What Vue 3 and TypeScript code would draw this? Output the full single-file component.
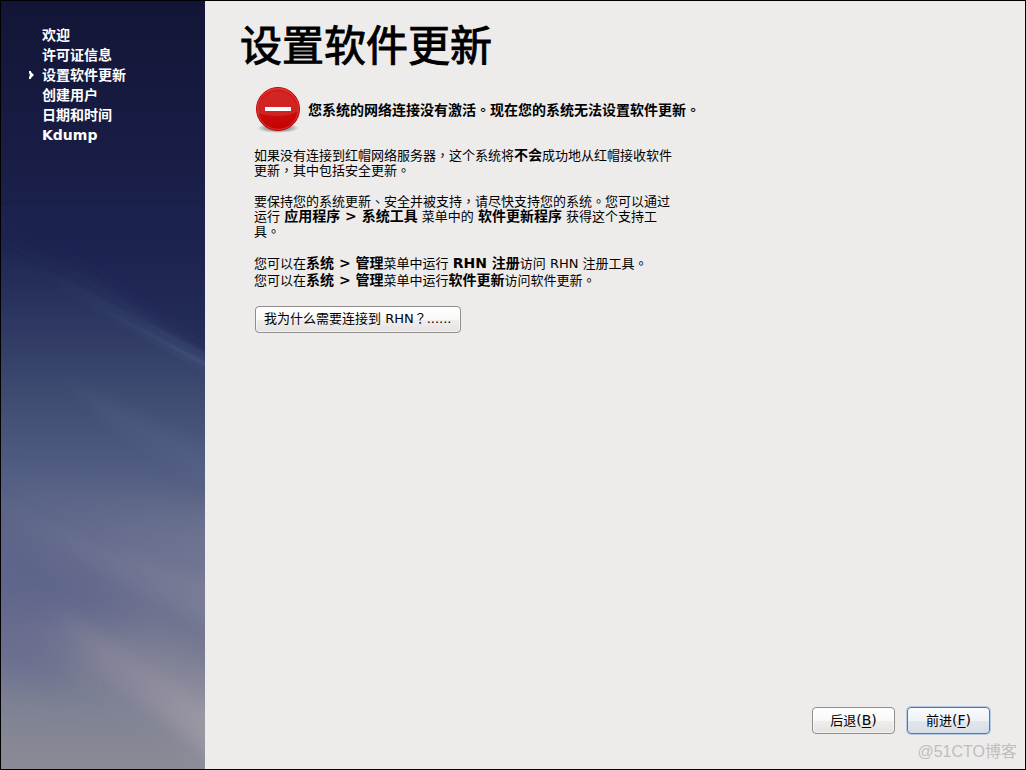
<script setup lang="ts">
import { h, type FunctionalComponent } from 'vue'

const steps: string[] = ['欢迎', '许可证信息', '设置软件更新', '创建用户', '日期和时间', 'Kdump']
const current = 2

/* Splits text so that punctuation, Han characters and Latin each get their own face. */
const Mixed: FunctionalComponent<{ text: string }> = (props) =>
  (props.text.match(/[，。、？]|[\u4e00-\u9fff]+|[^，。、？\u4e00-\u9fff]+/g) ?? []).map((part) => {
    if (/^[，。、？]$/.test(part)) return h('span', { class: 'punct', lang: 'zh-TW' }, part)
    if (/^[\u4e00-\u9fff]/.test(part)) return h('span', { class: 'han' }, part)
    return part
  })
Mixed.props = ['text']
</script>

<template>
  <div class="screen" lang="zh-CN">
    <aside class="sidebar">
      <svg class="sky" viewBox="0 0 204 768" preserveAspectRatio="none" aria-hidden="true">
        <defs>
          <linearGradient id="base" x1="0" y1="0" x2="0" y2="1">
            <stop offset="0" stop-color="#121536" />
            <stop offset="0.2" stop-color="#191d45" />
            <stop offset="0.31" stop-color="#1d2450" />
            <stop offset="0.4" stop-color="#2a3460" />
            <stop offset="0.5" stop-color="#3c486e" />
            <stop offset="0.62" stop-color="#525e82" />
            <stop offset="0.72" stop-color="#666c8d" />
            <stop offset="0.82" stop-color="#727690" />
            <stop offset="0.9" stop-color="#7c8093" />
            <stop offset="1" stop-color="#8a8b96" />
          </linearGradient>
          <filter id="b2" x="-30%" y="-30%" width="160%" height="160%"><feGaussianBlur stdDeviation="1" /></filter>
          <filter id="b8" x="-50%" y="-50%" width="200%" height="200%"><feGaussianBlur stdDeviation="7" /></filter>
          <filter id="b16" x="-50%" y="-50%" width="200%" height="200%"><feGaussianBlur stdDeviation="16" /></filter>
          <linearGradient id="streak" x1="0" y1="0" x2="1" y2="0">
            <stop offset="0" stop-color="#40557c" stop-opacity="0" />
            <stop offset="1" stop-color="#4a5e88" stop-opacity="0.7" />
          </linearGradient>
          <linearGradient id="ridge" x1="0" y1="0" x2="1" y2="0">
            <stop offset="0" stop-color="#6c7496" stop-opacity="0.2" />
            <stop offset="1" stop-color="#8d8da0" stop-opacity="0.8" />
          </linearGradient>
          <linearGradient id="ray" x1="0" y1="0" x2="1" y2="0">
            <stop offset="0" stop-color="#8b86a0" stop-opacity="0.1" />
            <stop offset="0.45" stop-color="#918c9f" stop-opacity="0.7" />
            <stop offset="1" stop-color="#aaa5ac" />
          </linearGradient>
        </defs>
        <rect width="204" height="768" fill="url(#base)" />
        <path d="M0 235L90 275L230 372V210H0Z" fill="#1c2351" opacity="0.6" filter="url(#b8)" />
        <path d="M20 255L204 351V372L70 296Z" fill="url(#streak)" opacity="0.3" filter="url(#b2)" />
        <path d="M50 280L210 364V369L90 302Z" fill="url(#streak)" opacity="0.7" filter="url(#b2)" />
        <path d="M60 376L210 446V490L105 420Z" fill="#606b91" opacity="0.2" filter="url(#b8)" />
        <path d="M-20 480L60 480L240 510V620L110 565L-20 500Z" fill="url(#ridge)" opacity="0.4" filter="url(#b16)" />
        <path d="M-20 490L110 548L240 590V642L110 574L-20 505Z" fill="url(#ridge)" opacity="0.45" filter="url(#b8)" />
        <path d="M-30 510L90 575L150 630L80 630L-30 600Z" fill="#596089" opacity="0.6" filter="url(#b16)" />
        <path d="M-30 570L20 600L80 690L-30 670Z" fill="#61638d" opacity="0.5" filter="url(#b16)" />
        <path d="M30 590L120 620L240 690V790L180 735L90 672Z" fill="url(#ray)" opacity="0.45" filter="url(#b16)" />
        <path d="M45 600L110 640L230 722V770L180 730L95 668Z" fill="url(#ray)" opacity="0.65" filter="url(#b8)" />
      </svg>
      <nav aria-label="设置步骤">
        <ol class="steps">
          <li v-for="(step, i) in steps" :key="step" class="step" :aria-current="i === current ? 'step' : undefined">
            <svg v-if="i === current" class="marker" viewBox="0 0 5 8" aria-hidden="true">
              <path d="M0 0H2V1L5 4L2 7V8H0V6L1 4L0 2Z" fill="#fff" />
            </svg>
            {{ step }}
          </li>
        </ol>
      </nav>
    </aside>

    <main class="main">
      <h1 class="title">设置软件更新</h1>
      <div class="content">
        <div class="alert" role="alert">
          <svg class="stop" viewBox="0 0 48 48" aria-hidden="true">
            <defs>
              <linearGradient id="red" x1="0" y1="0" x2="0" y2="1">
                <stop offset="0" stop-color="#d4201f" />
                <stop offset="1" stop-color="#c30000" />
              </linearGradient>
              <linearGradient id="gloss" x1="0" y1="0" x2="0" y2="1">
                <stop offset="0" stop-color="#fff" stop-opacity="0.04" />
                <stop offset="1" stop-color="#fff" stop-opacity="0.1" />
              </linearGradient>
              <radialGradient id="shade">
                <stop offset="0" stop-color="#000" stop-opacity="0.65" />
                <stop offset="0.6" stop-color="#000" stop-opacity="0.3" />
                <stop offset="1" stop-color="#000" stop-opacity="0" />
              </radialGradient>
            </defs>
            <ellipse cx="24" cy="42" rx="21" ry="5" fill="url(#shade)" />
            <circle cx="24" cy="23" r="21.5" fill="url(#red)" stroke="#bb0808" />
            <circle cx="24" cy="23" r="20.4" fill="none" stroke="#ee7474" stroke-opacity="0.45" />
            <path d="M4 27A20 20 0 1 1 44 25Q35 30 24 30Q12 30 4 27Z" fill="url(#gloss)" />
            <rect x="11" y="21" width="26" height="4" fill="#fff" />
          </svg>
          <strong><Mixed text="您系统的网络连接没有激活。现在您的系统无法设置软件更新。" /></strong>
        </div>

        <p class="notice">
          <Mixed text="如果没有连接到红帽网络服务器，这个系统将" /><strong><Mixed text="不会" /></strong><Mixed text="成功地从红帽接收软件" /><br />
          <Mixed text="更新，其中包括安全更新。" />
        </p>
        <p class="advice">
          <Mixed text="要保持您的系统更新、安全并被支持，请尽快支持您的系统。您可以通过" /><br />
          <Mixed text="运行 " /><strong><Mixed text="应用程序 > 系统工具" /></strong><Mixed text=" 菜单中的 " /><strong><Mixed text="软件更新程序" /></strong><Mixed text=" 获得这个支持工" /><br />
          <Mixed text="具。" />
        </p>
        <p class="paths">
          <Mixed text="您可以在" /><strong><Mixed text="系统 > 管理" /></strong><Mixed text="菜单中运行 " /><strong><Mixed text="RHN 注册" /></strong><Mixed text="访问 RHN 注册工具。" /><br />
          <Mixed text="您可以在" /><strong><Mixed text="系统 > 管理" /></strong><Mixed text="菜单中运行" /><strong><Mixed text="软件更新" /></strong><Mixed text="访问软件更新。" />
        </p>
        <button type="button" class="button why"><Mixed text="我为什么需要连接到 RHN？......" /></button>
      </div>

      <footer class="actions">
        <button type="button" class="button nav"><Mixed text="后退(" /><u>B</u>)</button>
        <button type="button" class="button nav primary"><Mixed text="前进(" /><u>F</u>)</button>
      </footer>
      <span class="watermark">@51CTO博客</span>
    </main>
  </div>
</template>

<style>
body {
  margin: 0;
}
</style>

<style scoped>
.screen {
  box-sizing: border-box;
  display: flex;
  min-height: 100vh;
  border: 1px solid #000;
  background: #edeceb;
  color: #000;
  font-family: "DejaVu Sans", "Noto Sans CJK SC", sans-serif;
  font-size: 13px;
}

.sidebar {
  position: relative;
  flex: 0 0 204px;
  color: #fff;
}

.sky {
  position: absolute;
  inset: 0;
  width: 100%;
  height: 100%;
}

.steps {
  position: relative;
  margin: 0;
  padding: 24px 0 0 41px;
  list-style: none;
  font-size: 14px;
  font-weight: bold;
  line-height: 20px;
}

.step {
  position: relative;
}

.marker {
  position: absolute;
  left: -13px;
  top: 6px;
  width: 5px;
  height: 8px;
}

.main {
  position: relative;
  flex: 1;
  display: flex;
  flex-direction: column;
}

.title {
  margin: 0;
  padding: 12px 0 0 35px;
  font-family: "Noto Sans CJK SC", sans-serif;
  font-size: 42px;
  font-weight: normal;
  line-height: 60px;
  -webkit-text-stroke: 1px #000;
}

.content {
  flex: 1;
  padding: 13px 48px 0 49px;
}

.alert {
  display: flex;
  align-items: center;
  gap: 6px;
}

.stop {
  flex: none;
  width: 48px;
  height: 48px;
}

p {
  margin: 0;
  white-space: nowrap;
}

strong {
  font-size: 14px;
  line-height: 1;
}

:deep(.han),
:deep(.punct) {
  line-height: 1;
}

:deep(.punct) {
  font-family: "DejaVu Sans", "Noto Sans CJK TC", sans-serif;
}

.notice {
  margin-top: 14px;
  line-height: 15px;
}

.advice {
  margin-top: 16px;
  line-height: 15px;
}

.paths {
  margin-top: 16px;
  line-height: 17px;
}

.button {
  box-sizing: border-box;
  height: 27px;
  padding: 0 8px 2px;
  border: 1px solid #8f8e8c;
  border-radius: 4px;
  background: linear-gradient(#fff, #f8f8f7 50%, #efeeed 52%, #e4e3e1);
  box-shadow: inset 0 0 0 1px rgba(255, 255, 255, 0.6);
  color: #000;
  font: inherit;
  line-height: 20px;
  white-space: nowrap;
}

.why {
  margin: 17px 0 0 1px;
}

.actions {
  display: flex;
  justify-content: flex-end;
  gap: 12px;
  padding: 0 35px 35px 0;
}

.nav {
  width: 83px;
  font-size: 14px;
}

.nav :deep(.han) {
  font-size: 13px;
}

.nav u {
  text-underline-offset: 2px;
}

.primary {
  border-color: #5876a4;
  background: linear-gradient(#fafbfe, #eef1f6 50%, #e2e6ed 52%, #d8dde5);
  box-shadow: 0 0 0 1px #b5cbe5;
}

.watermark {
  position: absolute;
  right: 8px;
  bottom: 7px;
  color: #bfbebd;
  font-family: "Liberation Sans", "Noto Sans CJK SC", sans-serif;
  font-size: 16px;
  line-height: 20px;
}
</style>
